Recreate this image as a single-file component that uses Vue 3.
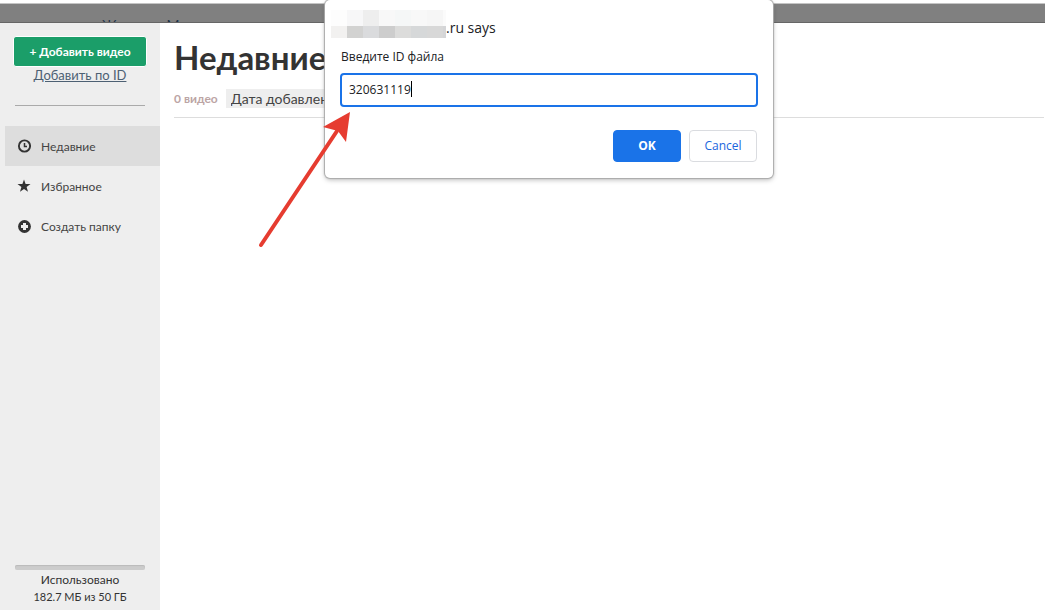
<script setup>
import { ref } from 'vue'

const fileId = ref('320631119')
const folders = [
  { id: 'recent', label: 'Недавние', active: true },
  { id: 'favorites', label: 'Избранное', active: false },
  { id: 'create', label: 'Создать папку', active: false }
]
const mosaic = [
  ['#fdfdfd', '#f7f7f8', '#eeeeee', '#f8f8f8', '#f5f7f7', '#f8f8f8', '#f6f6f6', '#fbfbfb'],
  ['#f2f1f0', '#d2d2d1', '#dadbdd', '#cdcdcd', '#dcdcdb', '#d6d8d9', '#d8d8d8', '#d4d5d7']
]
</script>

<template>
  <div class="page">
    <header class="topbar">
      <nav class="topnav">
        <a href="#">Ж</a>
        <a href="#">М</a>
      </nav>
    </header>

    <div class="body">
      <aside class="sidebar">
        <div class="actions">
          <button class="add" type="button">+ Добавить видео</button>
          <a class="add-id" href="#">Добавить по ID</a>
        </div>
        <nav class="folders">
          <a v-for="f in folders" :key="f.id" href="#" class="folder" :class="{ active: f.active }">
            <svg class="icon" viewBox="0 0 14 14" aria-hidden="true">
              <g v-if="f.id === 'recent'" fill="none" stroke="#333">
                <circle cx="7.5" cy="7" r="5.6" stroke-width="1.9" />
                <path d="M7.5 4v3.5h2.5" stroke-width="1.5" />
              </g>
              <path v-else-if="f.id === 'favorites'" fill="#333" d="M7 .5l1.6 4.4 4.9.1-3.9 2.9 1.4 4.9L7 9.9l-4 2.9 1.4-4.9L.5 5l4.9-.1z" />
              <g v-else>
                <circle cx="7.5" cy="7.5" r="6.4" fill="#333" />
                <path d="M7.5 4v7M4 7.5h7" stroke="#eee" stroke-width="3" shape-rendering="crispEdges" />
              </g>
            </svg>
            <span>{{ f.label }}</span>
          </a>
        </nav>
        <div class="usage">
          <div class="bar"></div>
          <div>Использовано</div>
          <div class="amount">182.7 МБ из 50 ГБ</div>
        </div>
      </aside>

      <main class="content">
        <h1>Недавние</h1>
        <div class="toolbar">
          <span class="count">0 видео</span>
          <select class="sort" aria-label="Сортировка">
            <option>Дата добавления</option>
          </select>
        </div>
      </main>
    </div>

    <form class="dialog" role="dialog" aria-labelledby="dialog-title" @submit.prevent>
      <div class="origin">
        <svg class="mosaic" viewBox="0 0 115 28" shape-rendering="crispEdges" aria-hidden="true">
          <g v-for="(row, r) in mosaic" :key="r">
            <rect v-for="(c, i) in row" :key="i" :x="i * 16" :y="r * 16" width="16" height="16" :fill="c" />
          </g>
        </svg>
        <span id="dialog-title">.ru says</span>
      </div>
      <label for="file-id">Введите ID файла</label>
      <div class="field">
        <input id="file-id" v-model="fileId" type="text" autocomplete="off" />
        <span class="caret" aria-hidden="true"></span>
      </div>
      <div class="buttons">
        <button class="ok" type="submit">OK</button>
        <button class="cancel" type="button">Cancel</button>
      </div>
    </form>

    <svg class="arrow" viewBox="0 0 96 140" aria-hidden="true">
      <path d="M6 136L82 22" stroke="#e63c30" stroke-width="4" stroke-linecap="round" />
      <path d="M95 3L91 33 83 22 68 18z" fill="#e63c30" />
    </svg>
  </div>
</template>

<style>
body {
  margin: 0;
  background: #fff;
}
</style>

<style scoped>
* {
  box-sizing: border-box;
}
.page {
  position: relative;
  display: flex;
  flex-direction: column;
  min-height: 100vh;
  overflow: hidden;
  padding-top: 3px;
  font-family: Lato, "Liberation Sans", sans-serif;
  color: #333;
}
.topbar {
  height: 20px;
  overflow: hidden;
  background: #808080;
  border-top: 1px solid #c4c4c4;
  border-bottom: 1px solid #666;
}
.topnav {
  display: flex;
  gap: 50px;
  padding: 12px 0 0 102px;
  font-size: 14px;
  line-height: 18px;
}
.topnav a {
  color: #1f3349;
  text-decoration: none;
}
.body {
  display: flex;
  flex: 1;
}
.sidebar {
  display: flex;
  flex-direction: column;
  width: 160px;
  background: #eee;
}
.actions {
  display: flex;
  flex-direction: column;
  align-items: center;
  margin: 0 15px;
  padding: 13px 0 21px;
  border-bottom: 1px solid #aaa;
}
.add {
  width: 134px;
  height: 31px;
  padding: 0;
  border: 1px solid #fff;
  border-radius: 3px;
  background: #1b9e69;
  color: #fff;
  font: 700 12px/28px Lato, "Liberation Sans", sans-serif;
}
.add-id {
  font-size: 13px;
  line-height: 17px;
  color: #4d6073;
  text-decoration: underline;
}
.folders {
  padding: 20px 0 0 5px;
}
.folder {
  display: flex;
  align-items: center;
  gap: 10px;
  height: 40px;
  padding: 0 12px;
  font-size: 12px;
  color: #444;
  text-decoration: none;
  white-space: nowrap;
}
.folder.active {
  background: #ddd;
}
.icon {
  width: 14px;
  height: 14px;
  flex: none;
}
.usage {
  margin: auto 15px 5px;
  text-align: center;
  font-size: 12px;
  line-height: 17px;
}
.amount {
  font-size: 11px;
}
.bar {
  height: 5px;
  margin-bottom: 1px;
  border-radius: 2px;
  background: #ccc;
  box-shadow: inset 0 1px 1px #bbb;
}
.content {
  flex: 1;
  padding: 14px 1px 0 14px;
}
h1 {
  margin: 0;
  font-size: 33px;
  line-height: 40px;
  font-weight: 700;
}
.toolbar {
  display: flex;
  align-items: center;
  gap: 8px;
  padding: 12px 0 9px;
  border-bottom: 1px solid #ddd;
}
.count {
  font-size: 12px;
  line-height: 16px;
  font-weight: 700;
  color: #bca5a5;
}
.sort {
  height: 19px;
  padding: 0 5px;
  border: 0;
  border-radius: 0;
  appearance: none;
  background: #eee;
  color: #444;
  font: 14px/19px Lato, "Liberation Sans", sans-serif;
}
.dialog {
  position: absolute;
  top: 0;
  left: 325px;
  width: 448px;
  padding: 10px 16px 16px;
  border-radius: 5px;
  background: #fff;
  box-shadow: 0 0 1px 1px #aaa, 0 2px 5px #0004;
  font: 12px/16px "Open Sans", "Noto Sans", sans-serif;
  color: #202124;
}
.origin {
  display: flex;
  align-items: center;
  height: 28px;
  margin: 0 0 11px -10px;
  font-size: 14px;
  line-height: 20px;
}
.origin span {
  padding-top: 7px;
}
.mosaic {
  width: 115px;
  height: 28px;
}
.dialog label {
  display: block;
}
.field {
  position: relative;
  margin: 8px -1px 23px;
}
.field input {
  display: block;
  width: 100%;
  height: 34px;
  padding: 0 7px 1px;
  border: 2px solid #1a73e8;
  border-radius: 4px;
  outline: 0;
  background: #fff;
  color: #202124;
  font: 12px/16px "Open Sans", "Noto Sans", sans-serif;
}
.caret {
  position: absolute;
  top: 8px;
  left: 71px;
  width: 1px;
  height: 16px;
  background: #000;
}
.buttons {
  display: flex;
  justify-content: flex-end;
  gap: 8px;
}
.buttons button {
  width: 68px;
  height: 32px;
  padding: 0;
  border: 1px solid #dadce0;
  border-radius: 4px;
  background: #fff;
  color: #1a66dd;
  font: 500 12px/16px "Open Sans", "Noto Sans", sans-serif;
}
.buttons .ok {
  border-color: #1a73e8;
  background: #1a73e8;
  color: #fff;
  font-weight: 700;
}
.arrow {
  position: absolute;
  top: 109px;
  left: 255px;
  width: 96px;
  height: 140px;
}
</style>
